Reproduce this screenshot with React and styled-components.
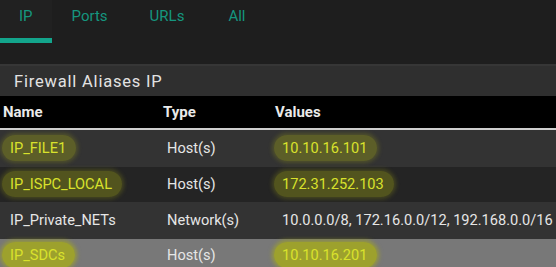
import React from 'react';
import styled, { createGlobalStyle } from 'styled-components';

const GlobalStyle = createGlobalStyle`
    html, body {
        margin: 0;
        padding: 0;
        background: #1e1e1e;
        font-family: Roboto, "Noto Sans", sans-serif;
    }
`;

const Page = styled.div`
    width: 556px;
    height: 267px;
    overflow: hidden;
    background: #1e1e1e;
`;

const TabBar = styled.div`
    display: flex;
    height: 64px;
    border-bottom: 2px solid #363636;
`;

const Tab = styled.div`
    height: 43px;
    padding: 0 ${(p) => p.$pad}px;
    display: flex;
    align-items: flex-start;
    padding-top: 7px;
    box-sizing: border-box;
    font-size: 15px;
    color: #15967f;
    background: ${(p) => (p.$active ? '#212121' : 'transparent')};
    border-bottom: 5px solid ${(p) => (p.$active ? '#13a58c' : 'transparent')};
`;

const Panel = styled.div`
    background: #2f2f2f;
`;

const PanelTitle = styled.h2`
    margin: 0;
    height: 30px;
    display: flex;
    align-items: center;
    padding-left: 14px;
    font-size: 16.5px;
    font-weight: 400;
    letter-spacing: 0.8px;
    color: #e2e2e2;
`;

const Table = styled.div`
    display: grid;
    grid-template-columns: 160px 112px 1fr;
`;

const HeadCell = styled.div`
    background: #000;
    height: 32px;
    display: flex;
    align-items: center;
    padding-left: 3px;
    font-size: 15px;
    font-weight: 700;
    color: #eaeaea;
    border-bottom: 2px solid #cfcfcf;
`;

const Cell = styled.div`
    height: ${(p) => p.$h}px;
    display: flex;
    align-items: center;
    padding-left: ${(p) => p.$pl}px;
    padding-bottom: 2px;
    box-sizing: border-box;
    font-size: 14.6px;
    color: #e6e6e6;
    white-space: nowrap;
    background: ${(p) => p.$bg};
`;

const Marker = styled.span`
    color: #d9e22c;
    background: rgba(170, 175, 20, ${(p) => (p.$light ? 0.75 : 0.35)});
    border-radius: 14px;
    padding: 4px 10px 4px 8px;
    margin-left: -8px;
    box-shadow: 0 0 4px 2px rgba(170, 175, 20, ${(p) => (p.$light ? 0.6 : 0.25)});
`;

const rows = [
    { name: 'IP_FILE1', type: 'Host(s)', values: '10.10.16.101', mark: true, bg: '#333333', h: 37 },
    { name: 'IP_ISPC_LOCAL', type: 'Host(s)', values: '172.31.252.103', mark: true, bg: '#242424', h: 35 },
    { name: 'IP_Private_NETs', type: 'Network(s)', values: '10.0.0.0/8, 172.16.0.0/12, 192.168.0.0/16', bg: '#333333', h: 37 },
    { name: 'IP_SDCs', type: 'Host(s)', values: '10.10.16.201', mark: true, bg: '#787878', h: 34, light: true },
];

export default function App() {
    return (
        <Page>
            <GlobalStyle />
            <TabBar>
                <Tab $active $pad={19}>IP</Tab>
                <Tab $pad={20}>Ports</Tab>
                <Tab $pad={22}>URLs</Tab>
                <Tab $pad={22}>All</Tab>
            </TabBar>
            <Panel>
                <PanelTitle>Firewall Aliases IP</PanelTitle>
                <Table>
                    <HeadCell>Name</HeadCell>
                    <HeadCell>Type</HeadCell>
                    <HeadCell>Values</HeadCell>
                    {rows.map((r) => (
                        <React.Fragment key={r.name}>
                            <Cell $bg={r.bg} $h={r.h} $pl={10}>
                                {r.mark ? <Marker $light={r.light}>{r.name}</Marker> : r.name}
                            </Cell>
                            <Cell $bg={r.bg} $h={r.h} $pl={7}>{r.type}</Cell>
                            <Cell $bg={r.bg} $h={r.h} $pl={10}>
                                {r.mark ? <Marker $light={r.light}>{r.values}</Marker> : r.values}
                            </Cell>
                        </React.Fragment>
                    ))}
                </Table>
            </Panel>
        </Page>
    );
}
